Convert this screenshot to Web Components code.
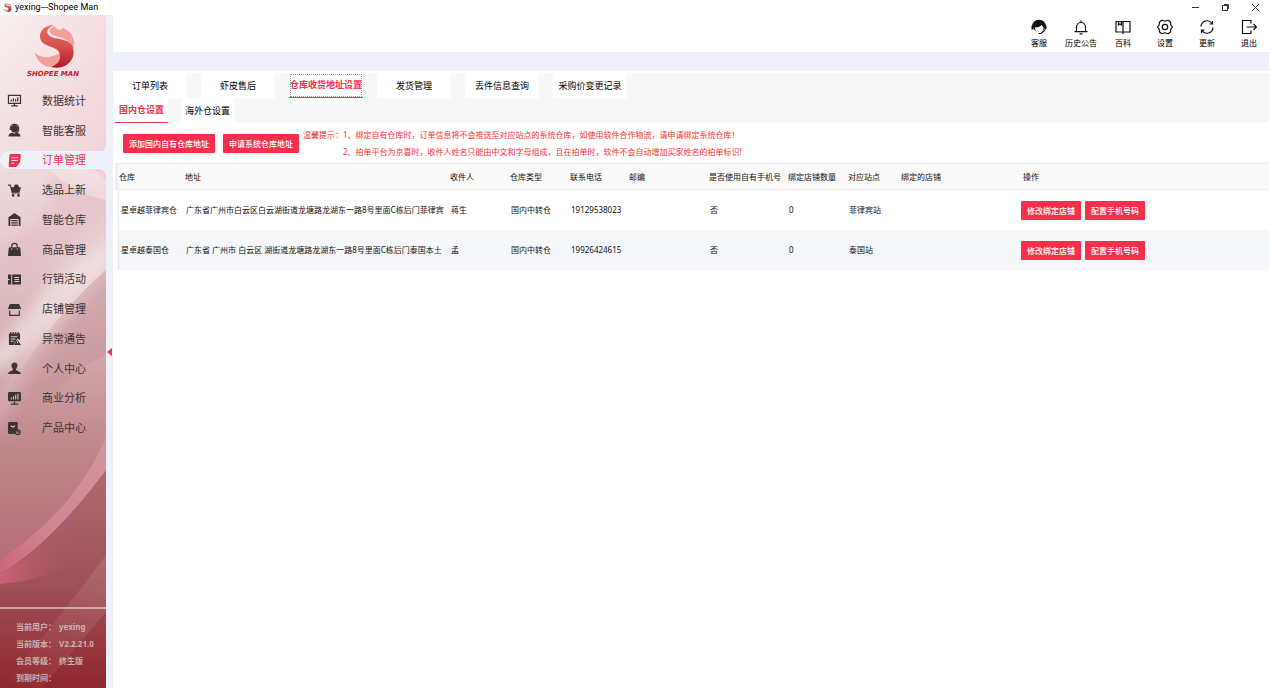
<!DOCTYPE html>
<html lang="zh-CN">
<head>
<meta charset="utf-8">
<title>yexing---Shopee Man</title>
<style>
  html, body { margin: 0; height: 100%; }
  body {
    font: 8px/16px "Noto Sans", "Noto Sans CJK SC", sans-serif;
    color: #111;
    --red: #f5304a;
    --lavender: #f0f0fa;
    --strip: #f8f8f8;
  }
</style>
</head>
<body>
<sm-app></sm-app>
<script>
const define = (name, render) => customElements.define(name, class extends HTMLElement {
  connectedCallback() {
    if (this.shadowRoot) return;
    const t = document.createElement('template');
    t.innerHTML = render(this);
    this.attachShadow({ mode: 'open' }).append(t.content.cloneNode(true));
  }
});

const swirl = `
  <path fill="#f2a09c" d="M21 1.500C23 5.500 27 6 29 3 38 6 43 16 39.500 25 37 16 30 13 23 11.500 13 9.500 14 3 21 1.500z"/>
  <path fill="#f2a09c" d="M0 28C7 35 15 34 26 29 28 34 23 41 17 43 8 43 2 36 0 28z"/>
  <path fill="url(#g)" d="M20 0C10 0 4 7 6 14 8 22 19 21 24 26 28 31 27 39 17 43 30 46 41 38 40 26 39 16 30 15 21 13.500 11 11 10 4 20 0z"/>`;
const swirlDefs = `<defs><linearGradient id="g" x1="0" y1="0" x2="0" y2="1"><stop stop-color="#ea6f63"/><stop offset=".5" stop-color="#d8504a"/><stop offset="1" stop-color="#b51724"/></linearGradient></defs>`;

/* Sidebar glyphs, all on a 14 x 14 grid; "k" marks knocked-out details. */
const navIcons = {
  stats: `<path class="l" d="M.5 1.500h13v8.500H.5z"/><path class="l" d="M3.500 6v2M5.800 4.500V8M8.200 5.500V8M10.500 3.500V8M7 10v2.500M3.500 12.800h7"/>`,
  agent: `<circle cx="7" cy="5" r="3.900"/><path class="l" d="M2.500 6.500V4.500a4.500 4 0 0 1 9 0v2M11.500 6.500C11 9 9 9.500 7 9.500"/><path d="M.5 13.500c0-3 3-4 4.500-4l2 1 2-1c1.500 0 4.500 1 4.500 4z"/>`,
  order: `<path d="M3 0h9.500q1.500 0 1.300 1.500L13 9l-4 5H2Q.5 14 .7 12.500L1.500 1.500Q1.600 0 3 0z"/><path class="k" d="M4 4h7M3.800 7h7M3.500 10h3"/>`,
  cart: `<path class="l" d="M0 1.200h2.500l2.200 8.300h8"/><path d="M3 3.500h3L7.500.5h3L12 3.500h2L12.500 8.500H4.300z"/><circle cx="5.500" cy="12.300" r="1.400"/><circle cx="11.300" cy="12.300" r="1.400"/>`,
  depot: `<path d="M7 0l6.500 4.500V14h-2V6.500h-9V14h-2V4.500z"/><path class="l" d="M3.500 8.300h7M3.500 10.600h7M3.500 13h7"/>`,
  bag: `<path d="M2 4.500h10q1 0 1.200 1L14 14H0L.8 5.500q.2-1 1.200-1z"/><path class="l" d="M4 5V3.500a3 3 0 0 1 6 0V5"/><path class="k" d="M4 6v1.200M10 6v1.200"/>`,
  promo: `<path d="M0 1.500h3.500v11H0zM4.500 1.500H14v11H4.500z"/><path class="k" d="M0 7h1.700M7 4.800h5M7 9.200h5M7 7h5"/>`,
  shop: `<path d="M2 1h10l1.800 4.500H.2zM.2 5h13.600v1.500H.2z"/><path class="l" d="M1.800 8v5.300h10.400V8"/>`,
  alert: `<path d="M1 1.500h12v7l-3-1.500-4 7H1z"/><path class="l" d="M3 0v3M5.700 0v3M8.300 0v3M11 0v3"/><path class="k" d="M3 5h7M3 7.500h5M3 10h3"/><path d="M10 8l4 6H6.500z"/><path class="k" d="M10.200 10v2"/>`,
  user: `<path d="M7 .5c4 0 4 4.500 1.500 7.500 0 1.500 5 1.500 5.500 5H0c.5-3.500 5.500-3.500 5.500-5C3 5 3 .5 7 .5z"/>`,
  monitor: `<path d="M1.500 0h11Q14 0 14 1.500v7q0 1.500-1.500 1.500h-11Q0 10 0 8.500v-7Q0 0 1.500 0z"/><path class="k" d="M3.500 6v2M6 4.500V8M8.300 3v5M10.700 2v6"/><path class="l" d="M7 10v2.500M3 13h8"/>`,
  product: `<path d="M1.500 0H9q1.500 0 1.500 1.500V8L7 13H1.500Q0 13 0 11.500v-10Q0 0 1.500 0z"/><path class="k" d="M3 4l2.300 1.500L7.500 4"/><circle class="l" cx="10.500" cy="11" r="2.500"/><path class="l" d="M10.500 9.500V11H12"/>`
};

/* Header glyphs, on a 16 x 16 grid. */
const toolIcons = {
  service: `<circle cx="8" cy="7" r="5.500" fill="#111"/><path fill="#fff" stroke="none" d="M4 8.500c3.500 0 5.500-1 6.500-2.500l2 2.500c0 3-2 5-4.500 5s-4-2-4-5z"/><path stroke-width="2" d="M1.500 7v3.500M14.500 7v3.500"/><path d="M1.500 8C1.500-1 14.500-1 14.500 8M14 11l-4 3.500H7.500"/>`,
  bell: `<path d="M3.500 12.500V8a4.500 4.500 0 0 1 9 0v4.500M1.500 12.700h13M8 3.500V1.500M6.500 14.900h3"/>`,
  book: `<path d="M1 2.500h14v10.500H1zM8 2.500V15M3.500 2.500V6L5 5l1.500 1V2.500"/>`,
  gear: `<path stroke-linejoin="round" d="M5 1.200l3 1 3-1 2.500 1.800.3 2.800L15.500 8l-1.700 2.200-.3 2.800L11 14.800l-3-1-3 1L2.500 13l-.3-2.800L.5 8l1.700-2.200L2.500 3z"/><circle cx="8" cy="8" r="2.700"/>`,
  refresh: `<path d="M2 7.500A6 6 0 0 1 13 4.500M14 8.500A6 6 0 0 1 3 11.500M13.500 2v3h-3M2.500 14v-3h3"/>`,
  exit: `<path d="M10 4.500V1.500H1.500v13H10v-3M5.500 8H15.500M12.500 5l3 3-3 3"/>`
};

define('sm-titlebar', () => `
  <style>
    :host { display: flex; align-items: center; height: 15px; background: #fff; font-size: 9px; line-height: 15px; color: #000; }
    .logo { width: 9px; height: 9px; margin: 0 3px; }
    .name { flex: 1; font-family: Roboto, sans-serif; }
    .controls { display: flex; gap: 2px; }
    button { width: 28px; height: 15px; padding: 0; border: 0; background: none; display: grid; place-items: center; }
    button svg { width: 9px; height: 9px; fill: none; stroke: #333; }
  </style>
  <svg class="logo" viewBox="0 0 42 44">${swirlDefs}${swirl}</svg>
  <span class="name">yexing---Shopee Man</span>
  <div class="controls">
    <button aria-label="最小化"><svg viewBox="0 0 9 9"><path d="M1 4.500h7"/></svg></button>
    <button aria-label="还原"><svg viewBox="0 0 9 9"><path d="M1.500 2.500h5v5h-5zM3 1.500h4.500V6"/></svg></button>
    <button aria-label="关闭"><svg viewBox="0 0 9 9"><path d="M1 1l7 7M8 1L1 8"/></svg></button>
  </div>`);

define('sm-backdrop', () => `
  <style>:host { display: block; overflow: hidden; } svg { display: block; width: 100%; height: 100%; }</style>
  <svg viewBox="0 0 106 673" preserveAspectRatio="none" aria-hidden="true">
    <defs>
      <linearGradient id="base" x1="0" y1="0" x2="0" y2="1">
        <stop stop-color="#f8eff0"/><stop offset=".2" stop-color="#f1dfe1"/><stop offset=".38" stop-color="#e2c5c9"/>
        <stop offset=".52" stop-color="#cfa3a8"/><stop offset=".65" stop-color="#bf868b"/><stop offset=".8" stop-color="#b56f79"/>
        <stop offset="1" stop-color="#93272c"/>
      </linearGradient>
      <linearGradient id="rose" x1="0" y1="0" x2="1" y2="0"><stop stop-color="#f4ccd3" stop-opacity="0"/><stop offset="1" stop-color="#f2c6ce" stop-opacity=".45"/></linearGradient>
      <linearGradient id="fold" x1="1" y1="0" x2="0" y2="1"><stop stop-color="#b87c83" stop-opacity=".35"/><stop offset="1" stop-color="#c48d93" stop-opacity=".1"/></linearGradient>
      <linearGradient id="petal" x1="1" y1="0" x2="0" y2="1"><stop stop-color="#d295a0"/><stop offset=".6" stop-color="#d08492"/><stop offset="1" stop-color="#c9607a"/></linearGradient>
      <linearGradient id="deep" x1="0" y1="0" x2="0" y2="1"><stop stop-color="#b06a70"/><stop offset=".5" stop-color="#a0525a"/><stop offset="1" stop-color="#8f272d"/></linearGradient>
      <linearGradient id="lip" x1="0" y1="0" x2="1" y2="0"><stop stop-color="#cc627b"/><stop offset="1" stop-color="#a8585f" stop-opacity="0"/></linearGradient>
      <linearGradient id="ray" x1="0" y1="1" x2="1" y2="0"><stop stop-color="#c08080" stop-opacity="0"/><stop offset="1" stop-color="#c08a8c" stop-opacity=".35"/></linearGradient>
      <filter id="soft" x="-50%" y="-50%" width="200%" height="200%"><feGaussianBlur stdDeviation="7"/></filter>
    </defs>
    <path fill="url(#base)" d="M0 0h106v673H0z"/>
    <path fill="url(#rose)" d="M0 0h106v200Q70 175 40 145L0 145z"/>
    <path fill="#e3b9c0" fill-opacity=".45" filter="url(#soft)" d="M50 155Q85 175 110 170v30Q60 240 0 275v-45Q60 205 50 155z"/>
    <path fill="#f6ecec" fill-opacity=".5" d="M50 155Q75 180 106 185V165L92 153z"/>
    <path fill="#f4eaea" fill-opacity=".65" filter="url(#soft)" d="M115 222Q60 250 30 295L-10 335v30Q55 320 115 250z"/>
    <path fill="#f0dfdf" fill-opacity=".4" filter="url(#soft)" d="M70 282Q25 325-10 400v25Q20 370 70 300z"/>
    <path fill="url(#fold)" d="M106 255Q60 295 25 350L0 385v55q60-80 106-100z"/>
    <path fill="url(#petal)" d="M106 422Q75 495 0 545v24l60 4 46-90z"/>
    <path fill="url(#deep)" d="M106 455Q50 530 0 559v114h106z"/>
    <path fill="url(#lip)" d="M0 559Q40 537 64 506L75 545Q50 565 0 569z"/>
    <path fill="url(#ray)" d="M106 540Q70 590 0 673h42L106 597z"/>
    <path fill="#fff" fill-opacity=".5" d="M0 592h106v2H0z"/>
  </svg>`);

define('sm-nav-item', el => `
  <style>
    :host { display: grid; align-items: center; position: relative; }
    button { display: flex; align-items: center; width: 100%; height: 18px; padding: 0 0 0 8px; border: 0; background: none;
      font: inherit; font-size: 11px; line-height: 18px; color: #3c3435; text-align: left; cursor: pointer; }
    svg { width: 13px; height: 13px; margin-right: 21px; fill: currentColor; overflow: visible; flex: none; }
    .l { fill: none; stroke: currentColor; stroke-width: 1.3; }
    .k { fill: none; stroke: #e3cccf; stroke-width: 1.1; }
    :host([current]) button { background: var(--lavender); color: var(--red); border-radius: 9px 0 0 9px; }
    :host([current]) .k { stroke: #fbdfe6; }
    :host([current])::before, :host([current])::after { content: ""; position: absolute; right: 0; width: 8px; height: 8px; }
    :host([current])::before { top: -2px; background: radial-gradient(circle at 0 0, transparent 8px, var(--lavender) 8px); }
    :host([current])::after { bottom: -2px; background: radial-gradient(circle at 0 100%, transparent 8px, var(--lavender) 8px); }
  </style>
  <button${el.hasAttribute('current') ? ' aria-current="page"' : ''}><svg viewBox="0 0 14 14" aria-hidden="true">${navIcons[el.getAttribute('icon')]}</svg><slot></slot></button>`);

define('sm-user-info', () => `
  <style>
    :host { display: block; font-weight: 700; line-height: 17px; color: #c9b0b0; }
    dl { display: grid; grid-template-columns: 43px 1fr; grid-auto-rows: 17px; margin: 0; }
    dt, dd { margin: 0; }
  </style>
  <dl>
    <dt>当前用户：</dt><dd>yexing</dd>
    <dt>当前版本：</dt><dd>V2.2.21.0</dd>
    <dt>会员等级：</dt><dd>终生版</dd>
    <dt>到期时间：</dt><dd></dd>
  </dl>`);

define('sm-sidebar', () => `
  <style>
    :host { display: flex; flex-direction: column; position: relative; }
    sm-backdrop { position: absolute; inset: 0; }
    .brand, nav, sm-user-info { position: relative; }
    .brand { display: flex; flex-direction: column; align-items: center; height: 71px; box-sizing: border-box; padding-top: 10px;
      font: italic 700 7px/12px "DejaVu Sans", sans-serif; color: #c8232f; white-space: nowrap; }
    .brand svg { width: 42px; height: 43px; margin-left: 4px; }
    nav { display: grid; grid-template-rows: repeat(12, 1fr); height: 357px; }
    sm-user-info { margin-top: auto; padding: 0 0 2px 16px; }
  </style>
  <sm-backdrop></sm-backdrop>
  <div class="brand"><svg viewBox="0 0 42 44" aria-hidden="true">${swirlDefs}${swirl}</svg><span>SHOPEE MAN</span></div>
  <nav>
    <sm-nav-item icon="stats">数据统计</sm-nav-item>
    <sm-nav-item icon="agent">智能客服</sm-nav-item>
    <sm-nav-item icon="order" current>订单管理</sm-nav-item>
    <sm-nav-item icon="cart">选品上新</sm-nav-item>
    <sm-nav-item icon="depot">智能仓库</sm-nav-item>
    <sm-nav-item icon="bag">商品管理</sm-nav-item>
    <sm-nav-item icon="promo">行销活动</sm-nav-item>
    <sm-nav-item icon="shop">店铺管理</sm-nav-item>
    <sm-nav-item icon="alert">异常通告</sm-nav-item>
    <sm-nav-item icon="user">个人中心</sm-nav-item>
    <sm-nav-item icon="monitor">商业分析</sm-nav-item>
    <sm-nav-item icon="product">产品中心</sm-nav-item>
  </nav>
  <sm-user-info></sm-user-info>`);

define('sm-tool', el => `
  <style>
    :host { display: block; width: 34px; }
    button { display: flex; flex-direction: column; align-items: center; width: 100%; padding: 0; border: 0; background: none;
      font: inherit; line-height: 16px; color: #000; white-space: nowrap; cursor: pointer; }
    svg { width: 16px; height: 16px; fill: none; stroke: #111; stroke-width: 1.2; }
  </style>
  <button><svg viewBox="0 0 16 16" aria-hidden="true">${toolIcons[el.getAttribute('icon')]}</svg><slot></slot></button>`);

define('sm-toolbar', () => `
  <style>:host { display: flex; justify-content: flex-end; gap: 8px; height: 37px; box-sizing: border-box; padding: 4px 3px 0 0; background: #fff; }</style>
  <sm-tool icon="service">客服</sm-tool>
  <sm-tool icon="bell">历史公告</sm-tool>
  <sm-tool icon="book">百科</sm-tool>
  <sm-tool icon="gear">设置</sm-tool>
  <sm-tool icon="refresh">更新</sm-tool>
  <sm-tool icon="exit">退出</sm-tool>`);

define('sm-tab', el => `
  <style>
    :host { display: block; }
    button { display: block; width: 100%; height: 25px; padding: 0 4px; border: 0; background: #fff; font: inherit; font-size: 9px;
      line-height: 25px; color: #000; white-space: nowrap; cursor: pointer; }
    :host([wide]) button { width: 74px; padding: 0; }
    :host([current]) button { color: var(--red); font-weight: 700; border-bottom: 1px solid var(--red); line-height: 24px; }
    :host([focused]) button { outline: 1px dotted #999; outline-offset: -2px; }
  </style>
  <button role="tab" aria-selected="${el.hasAttribute('current')}"><slot></slot></button>`);

define('sm-tabs', () => `
  <style>
    :host { display: flex; background: var(--strip); }
    div { display: flex; gap: var(--tab-gap, 14px); }
  </style>
  <div role="tablist"><slot></slot></div>`);

define('sm-button', () => `
  <style>
    :host { display: inline-block; }
    button { display: block; height: 19px; padding: 0 6px; border: 0; border-radius: 1px; background: var(--red); color: #fff;
      font: inherit; font-weight: 500; line-height: 19px; white-space: nowrap; cursor: pointer; }
  </style>
  <button><slot></slot></button>`);

define('sm-actions', () => `
  <style>
    :host { display: flex; height: 40px; padding-left: 10px; gap: 8px; }
    sm-button { margin-top: 11px; }
    .tip { display: grid; grid-template-columns: 40px auto; grid-auto-rows: 17px; line-height: 17px; padding-top: 3px; margin-left: -4px; color: #ff3030; white-space: nowrap; }
    .text { grid-column: 2; }
  </style>
  <sm-button>添加国内自有仓库地址</sm-button>
  <sm-button>申请系统仓库地址</sm-button>
  <div class="tip">
    <span>温馨提示：</span><span class="text">1、绑定自有仓库时，订单信息将不会推送至对应站点的系统仓库，如使用软件合作物流，请申请绑定系统仓库！</span>
    <span class="text">2、拍单平台为京喜时，收件人姓名只能由中文和字母组成，且在拍单时，软件不会自动增加买家姓名的拍单标识!</span>
  </div>`);

const heads = ['仓库', '地址', '收件人', '仓库类型', '联系电话', '邮编', '是否使用自有手机号', '绑定店铺数量', '对应站点', '绑定的店铺', '操作'];
const widths = [70, 265, 60, 60, 59, 80, 79, 60, 53, 120];
const rows = [
  ['星卓越菲律宾仓', '广东省广州市白云区白云湖街道龙塘路龙湖东一路8号里面C栋后门菲律宾', '蒋生', '国内中转仓', '19129538023', '', '否', '0', '菲律宾站', ''],
  ['星卓越泰国仓', '广东省 广州市 白云区 湖街道龙塘路龙湖东一路8号里面C栋后门泰国本土', '孟', '国内中转仓', '19926424615', '', '否', '0', '泰国站', '']
];
define('sm-warehouses', () => `
  <style>
    :host { display: block; margin-left: 2px; }
    table { width: 100%; table-layout: fixed; border-spacing: 0; }
    th, td { padding: 0; text-align: left; white-space: nowrap; font-weight: 400; }
    th { height: 25px; background: #fafafa; border: solid #eee; border-width: 1px 0; }
    th:first-child { border-left: 3px solid #f0f0f0; padding-left: 1px; }
    td { height: 40px; padding-left: 1px; }
    td:first-child { border-left: 3px solid #fff; box-shadow: inset 1px 0 #e8e8e8; padding-left: 3px; }
    tbody tr:nth-child(even) td { background-color: #f6f7fa; background-clip: padding-box; }
    th:last-child { padding-left: 2px; }
    .ops { display: flex; gap: 4px; }
    td:last-child { padding: 0; }
  </style>
  <table>
    <colgroup>${widths.map(w => `<col style="width:${w}px">`).join('')}<col></colgroup>
    <thead><tr>${heads.map(h => `<th scope="col">${h}</th>`).join('')}</tr></thead>
    <tbody>${rows.map(r => `<tr>${r.map(c => `<td>${c}</td>`).join('')}<td><div class="ops"><sm-button>修改绑定店铺</sm-button><sm-button>配置手机号码</sm-button></div></td></tr>`).join('')}</tbody>
  </table>`);

define('sm-app', () => `
  <style>
    :host { display: grid; grid-template: auto 1fr / 106px 7px minmax(0, 1fr); min-height: 100vh; background: var(--lavender); }
    sm-titlebar { grid-column: 1 / -1; }
    .rail { display: flex; align-items: center; }
    .collapse { width: 7px; height: 10px; padding: 0; border: 0; background: none; display: block; cursor: pointer; }
    .collapse svg { display: block; width: 7px; height: 10px; fill: var(--red); }
    .work { display: flex; flex-direction: column; gap: 19px; }
    main { flex: 1; background: #fff; padding-top: 2px; }
    .sub { --tab-gap: 13px; padding-left: 2px; }
  </style>
  <sm-titlebar></sm-titlebar>
  <sm-sidebar></sm-sidebar>
  <div class="rail"><button class="collapse" aria-label="收起侧栏"><svg viewBox="0 0 7 10"><path d="M1 5l5-4v8z"/></svg></button></div>
  <div class="work">
    <sm-toolbar></sm-toolbar>
    <main>
      <sm-tabs>
        <sm-tab wide>订单列表</sm-tab>
        <sm-tab wide>虾皮售后</sm-tab>
        <sm-tab wide current focused>仓库收货地址设置</sm-tab>
        <sm-tab wide>发货管理</sm-tab>
        <sm-tab wide>丢件信息查询</sm-tab>
        <sm-tab wide>采购价变更记录</sm-tab>
      </sm-tabs>
      <sm-tabs class="sub">
        <sm-tab current>国内仓设置</sm-tab>
        <sm-tab>海外仓设置</sm-tab>
      </sm-tabs>
      <sm-actions></sm-actions>
      <sm-warehouses></sm-warehouses>
    </main>
  </div>`);
</script>
</body>
</html>
